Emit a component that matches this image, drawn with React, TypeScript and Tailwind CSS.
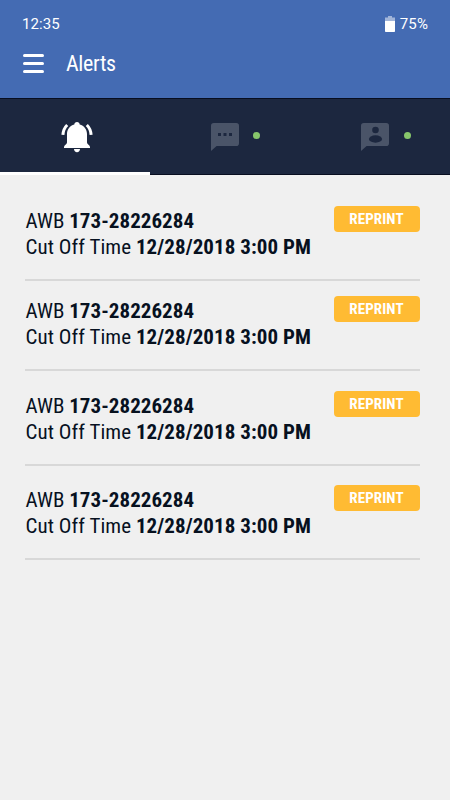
import type { ReactNode } from "react";

interface Alert {
  id: number;
  awb: string;
  cutOff: string;
  className: string;
}

const ALERTS: Alert[] = [
  { id: 1, awb: "173-28226284", cutOff: "12/28/2018 3:00 PM", className: "h-[90px]" },
  { id: 2, awb: "173-28226284", cutOff: "12/28/2018 3:00 PM", className: "h-[90px]" },
  { id: 3, awb: "173-28226284", cutOff: "12/28/2018 3:00 PM", className: "h-[95px] pt-[5px]" },
  { id: 4, awb: "173-28226284", cutOff: "12/28/2018 3:00 PM", className: "h-[94px] pt-1" },
];

function BatteryIcon() {
  return (
    <svg viewBox="0 0 10 16" className="h-4 w-2.5" fill="#fff">
      <path opacity=".5" d="M3 0h4v1.500h3V5H0V1.500h3z" />
      <path d="M0 5h10v10.200a.8.8 0 0 1-.8.8H.8a.8.8 0 0 1-.8-.8z" />
    </svg>
  );
}

function BellIcon() {
  return (
    <svg viewBox="0 0 32 32" className="h-8 w-8" fill="#fff">
      <path d="M16 1c-1.600 0-2.600 1.100-2.700 2.600C8.900 4.800 6 8.500 6 13v8.500c0 1.800-3 2.800-3 4.500v1h26v-1c0-1.700-3-2.700-3-4.500V13c0-4.500-2.900-8.200-7.300-9.400C18.600 2.100 17.600 1 16 1z" />
      <path d="M13 28h6c0 1.900-1.300 3.200-3 3.200s-3-1.300-3-3.200z" />
      <path d="M6.200 4C3.600 6.500 2.200 9.800 1.900 13.800M25.800 4c2.600 2.500 4 5.800 4.300 9.800" fill="none" stroke="#fff" strokeWidth="3" />
    </svg>
  );
}

function MessageIcon() {
  return (
    <svg viewBox="0 0 28 28" className="size-7">
      <path fill="#4a5468" d="M2.800 0h22.400A2.800 2.800 0 0 1 28 2.800v17.400a2.800 2.800 0 0 1-2.800 2.800H5.600L0 28V2.800A2.800 2.800 0 0 1 2.800 0z" />
      <path fill="#1c273f" d="M7 10h3v3H7zM12.500 10h3v3h-3zM18 10h3v3h-3z" />
    </svg>
  );
}

function ContactIcon() {
  return (
    <svg viewBox="0 0 28 28" className="size-7">
      <path fill="#4a5468" d="M2.800 0h22.400A2.800 2.800 0 0 1 28 2.800v17.400a2.800 2.800 0 0 1-2.800 2.800H5.600L0 28V2.800A2.800 2.800 0 0 1 2.800 0z" />
      <circle cx="14.500" cy="7" r="3.300" fill="#1c273f" />
      <ellipse cx="14.500" cy="16" rx="6.600" ry="3.700" fill="#1c273f" />
    </svg>
  );
}

function Dot() {
  return <span className="-mt-0.5 size-[7px] rounded-full bg-[#87c66b]" />;
}

function Tab({ children, className }: { children: ReactNode; className: string }) {
  return (
    <button type="button" className={`flex h-full w-[150px] items-center ${className}`}>
      {children}
    </button>
  );
}

function AlertRow({ alert }: { alert: Alert }) {
  return (
    <li className={`flex justify-between border-b-2 border-[#d8d8d8] ${alert.className}`}>
      <div className="pt-[17px] pl-[0.5px] text-[21px] leading-[26px] whitespace-nowrap [font-stretch:75%]">
        <p>
          AWB <b className="tracking-[0.05px]">{alert.awb}</b>
        </p>
        <p className="tracking-[0.06px]">
          Cut Off Time <b>{alert.cutOff}</b>
        </p>
      </div>
      <button
        type="button"
        className="mt-[15px] flex h-[26px] w-[86px] shrink-0 items-center justify-center rounded-[4px] bg-[#ffbb33] pt-px pr-px text-[15px] leading-none font-bold tracking-[0.1px] text-white [font-stretch:75%]"
      >
        REPRINT
      </button>
    </li>
  );
}

export default function App() {
  return (
    <div className="h-[800px] w-[450px] overflow-hidden bg-[#f0f0f0] font-['Roboto',sans-serif] text-[#07111f]">
      <header className="h-[98px] bg-[#446bb3] text-white">
        <div className="flex h-12 items-center justify-between pr-[22px] pl-[22px] text-[15px] font-[450] tracking-[0.1px]">
          <span>12:35</span>
          <div className="flex items-center gap-[5px]">
            <BatteryIcon />
            <span>75%</span>
          </div>
        </div>
        <div className="flex h-[30px] items-center gap-[22px] pl-[23px]">
          <button type="button" className="flex w-[21px] flex-col gap-[5px]">
            <span className="h-[3px] rounded-full bg-white" />
            <span className="h-[3px] rounded-full bg-white" />
            <span className="h-[3px] rounded-full bg-white" />
          </button>
          <h1 className="text-[22px] tracking-[-0.35px] [font-stretch:75%]">Alerts</h1>
        </div>
      </header>

      <nav className="flex h-[77px] border-y border-[#080e20] bg-[#1c273f]">
        <div className="relative">
          <Tab className="pl-[61px]">
            <BellIcon />
          </Tab>
          <span className="absolute -bottom-px left-0 h-[3px] w-[150px] bg-white" />
        </div>
        <Tab className="gap-[14px] pl-[61px]">
          <MessageIcon />
          <Dot />
        </Tab>
        <Tab className="gap-[15px] pl-[61px]">
          <ContactIcon />
          <Dot />
        </Tab>
      </nav>

      <ul className="pt-4 pr-[30px] pl-[25px]">
        {ALERTS.map((alert) => (
          <AlertRow key={alert.id} alert={alert} />
        ))}
      </ul>
    </div>
  );
}
